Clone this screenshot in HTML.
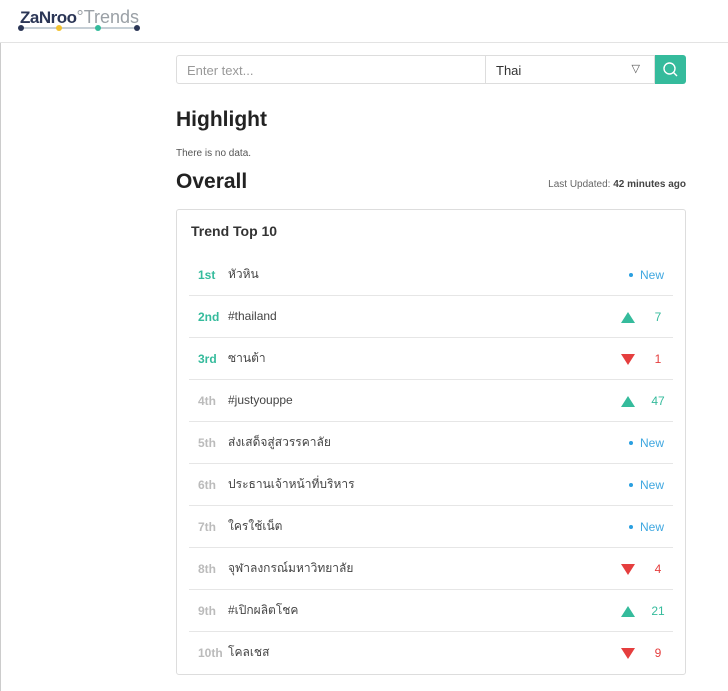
<!DOCTYPE html>
<html><head><meta charset="utf-8"><style>
*{box-sizing:border-box;margin:0;padding:0}
body{width:728px;height:691px;background:#fff;font-family:"Liberation Sans",Arial,sans-serif;color:#222;position:relative;overflow:hidden}
.hdr{position:absolute;left:0;top:0;width:728px;height:43px;border-bottom:1px solid #e3e3e3}
.lside{position:absolute;left:0;top:43px;width:1px;height:648px;background:#ccc}
.logo{position:absolute;left:20px;top:7px;font-size:18px}
.logo b{color:#2b3656;font-weight:900;letter-spacing:-0.5px;font-size:17px}
.logo span{color:#9aa0a6;font-weight:400}
.line{position:absolute;left:21px;top:27px;width:117px;height:2px;background:#c6cfd6}
.dot{position:absolute;top:25px;width:6px;height:6px;border-radius:50%}
.search{position:absolute;left:176px;top:55px;width:510px;height:29px}
.inp{position:absolute;left:0;top:0;width:310px;height:29px;border:1px solid #ddd;border-radius:3px 0 0 3px;font-size:13px;color:#999;padding:7px 10px}
.sel{position:absolute;left:310px;top:0;width:169px;height:29px;border:1px solid #ddd;border-left:none;font-size:13px;color:#333;padding:7px 10px}
.sel i{position:absolute;right:14px;top:6px;font-style:normal;font-size:11px;color:#555}
.btn{position:absolute;left:479px;top:0;width:31px;height:29px;background:#35bb9c;border-radius:0 3px 3px 0}
h2{position:absolute;left:176px;font-size:21px;font-weight:700;color:#222}
.nd{position:absolute;left:176px;top:148px;font-size:10px;color:#555}
.lu{position:absolute;right:42px;top:179px;font-size:10px;color:#666}
.lu b{color:#444}
.card{position:absolute;left:176px;top:209px;width:510px;height:466px;border:1px solid #ddd;border-radius:3px}
.ct{position:absolute;left:14px;top:13px;font-size:14px;font-weight:700;color:#333}
.row{position:absolute;left:12px;width:484px;height:42px;border-bottom:1px solid #e6e6e6;font-size:12px;display:flex;align-items:center}
.rk{position:absolute;left:9px;top:0;line-height:42px;font-weight:700;color:#bbb}
.rk.g{color:#35bb9c}
.nm{position:absolute;left:39px;top:0;line-height:40px;height:42px;color:#444;font-size:12px}
.nw{position:absolute;right:9px;top:0;line-height:42px;color:#3fa7e0}
.bd{position:absolute;right:40px;top:19px;width:4px;height:4px;border-radius:50%;background:#2a9fe0}
.up{position:absolute;right:38px;top:16px;width:0;height:0;border-left:7px solid transparent;border-right:7px solid transparent;border-bottom:11px solid #35bb9c}
.dn{position:absolute;right:38px;top:16px;width:0;height:0;border-left:7px solid transparent;border-right:7px solid transparent;border-top:11px solid #e53e3e}
.v{position:absolute;top:0;line-height:42px;right:0;width:30px;text-align:center}
.v.g{color:#35bb9c}.v.r{color:#e53e3e}
</style></head><body>
<div class="hdr">
<div class="logo"><b>ZaNroo</b><span>°Trends</span></div>
<div class="line"></div>
<div class="dot" style="left:18px;background:#2b3656"></div>
<div class="dot" style="left:56px;background:#f2c12e"></div>
<div class="dot" style="left:95px;background:#35bb9c"></div>
<div class="dot" style="left:134px;background:#2b3656"></div>
</div>
<div class="lside"></div>
<div class="search">
<div class="inp">Enter text...</div>
<div class="sel">Thai<i>▽</i></div>
<div class="btn"><svg width="31" height="29" viewBox="0 0 31 29"><circle cx="14.5" cy="13.5" r="5.5" fill="none" stroke="#fff" stroke-width="1.4"/><line x1="18.5" y1="17.5" x2="22" y2="21" stroke="#fff" stroke-width="1.4"/></svg></div>
</div>
<h2 style="top:108px">Highlight</h2>
<div class="nd">There is no data.</div>
<h2 style="top:170px">Overall</h2>
<div class="lu">Last Updated: <b>42 minutes ago</b></div>
<div class="card">
<div class="ct">Trend Top 10</div>
<div class="row" style="top:44px"><span class="rk g">1st</span><span class="nm">หัวหิน</span><span class="bd"></span><span class="nw">New</span></div>
<div class="row" style="top:86px"><span class="rk g">2nd</span><span class="nm">#thailand</span><span class="up"></span><span class="v g">7</span></div>
<div class="row" style="top:128px"><span class="rk g">3rd</span><span class="nm">ซานต้า</span><span class="dn"></span><span class="v r">1</span></div>
<div class="row" style="top:170px"><span class="rk">4th</span><span class="nm">#justyouppe</span><span class="up"></span><span class="v g">47</span></div>
<div class="row" style="top:212px"><span class="rk">5th</span><span class="nm">ส่งเสด็จสู่สวรรคาลัย</span><span class="bd"></span><span class="nw">New</span></div>
<div class="row" style="top:254px"><span class="rk">6th</span><span class="nm">ประธานเจ้าหน้าที่บริหาร</span><span class="bd"></span><span class="nw">New</span></div>
<div class="row" style="top:296px"><span class="rk">7th</span><span class="nm">ใครใช้เน็ต</span><span class="bd"></span><span class="nw">New</span></div>
<div class="row" style="top:338px"><span class="rk">8th</span><span class="nm">จุฬาลงกรณ์มหาวิทยาลัย</span><span class="dn"></span><span class="v r">4</span></div>
<div class="row" style="top:380px"><span class="rk">9th</span><span class="nm">#เปิกผลิตโชค</span><span class="up"></span><span class="v g">21</span></div>
<div class="row" style="top:422px;border-bottom:none"><span class="rk">10th</span><span class="nm">โคลเชส</span><span class="dn"></span><span class="v r">9</span></div>
</div>
</body></html>
